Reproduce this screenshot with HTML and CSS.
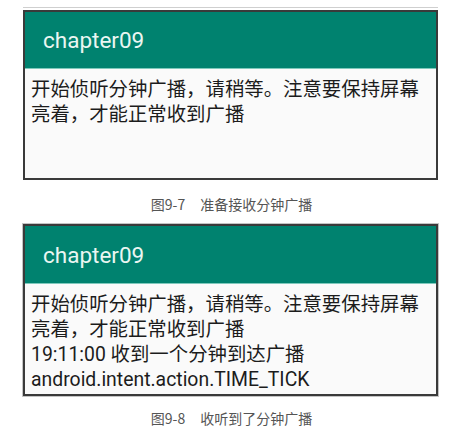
FILE: index.html
```html
<!DOCTYPE html>
<html lang="zh-CN">
<head>
<meta charset="utf-8">
<title>chapter09</title>
<link rel="stylesheet" href="styles.css">
</head>
<body>
<div class="page">
  <div class="rule"></div>
  <div class="card card-first">
    <div class="appbar"><span class="title">chapter09</span></div>
    <div class="content content-short">
      <div class="line">开始侦听分钟广播，请稍等。注意要保持屏幕</div>
      <div class="line">亮着，才能正常收到广播</div>
    </div>
  </div>
  <div class="caption caption-first"><span class="fig">图9-7</span><span>准备接收分钟广播</span></div>

  <div class="card card-second">
    <div class="appbar"><span class="title">chapter09</span></div>
    <div class="content content-long">
      <div class="line">开始侦听分钟广播，请稍等。注意要保持屏幕</div>
      <div class="line">亮着，才能正常收到广播</div>
      <div class="line">19:11:00 收到一个分钟到达广播</div>
      <div class="line">android.intent.action.TIME_TICK</div>
    </div>
  </div>
  <div class="caption caption-second"><span class="fig">图9-8</span><span>收听到了分钟广播</span></div>
</div>
</body>
</html>
```

FILE: styles.css
```css
html, body {
  margin: 0;
  padding: 0;
  background: #ffffff;
}

.page {
  padding-top: 7px;
  display: flex;
  flex-direction: column;
}

.rule {
  margin-left: 23px;
  width: 415px;
  height: 1px;
  background: #cfcfcf;
}

.card {
  margin-left: 23px;
  width: 415px;
  box-sizing: border-box;
  border: 2px solid #3a3a3a;
  background: #fafafa;
  display: flex;
  flex-direction: column;
}

.card-first {
  margin-top: 2px;
}

.card-second {
  margin-top: 10px;
  box-shadow: 0 0 0 1px #c4c4c4;
}

.appbar {
  height: 57px;
  background: #00826f;
  display: flex;
  align-items: center;
  padding-left: 18px;
  border-bottom: 1px solid #7fc9bc;
  box-sizing: border-box;
}

.card-second .appbar {
  height: 58px;
}

.title {
  font-family: Roboto, "Noto Sans", sans-serif;
  font-size: 22.5px;
  color: #eaf6f2;
}

.content {
  padding: 8px 0 0 6px;
  box-sizing: border-box;
  font-family: Roboto, "Noto Sans CJK SC", sans-serif;
  font-size: 19.4px;
  line-height: 25px;
  color: #1c1c1c;
}

.content-short {
  height: 109px;
}

.content-long {
  height: 110px;
}

.caption {
  height: 20px;
  line-height: 20px;
  display: flex;
  justify-content: center;
  font-family: "Noto Sans CJK SC", sans-serif;
  font-size: 14px;
  color: #555555;
  padding-right: 10px;
}

.caption-first {
  margin-top: 14px;
}

.caption-second {
  margin-top: 12px;
}

.fig {
  margin-right: 15px;
}
```
